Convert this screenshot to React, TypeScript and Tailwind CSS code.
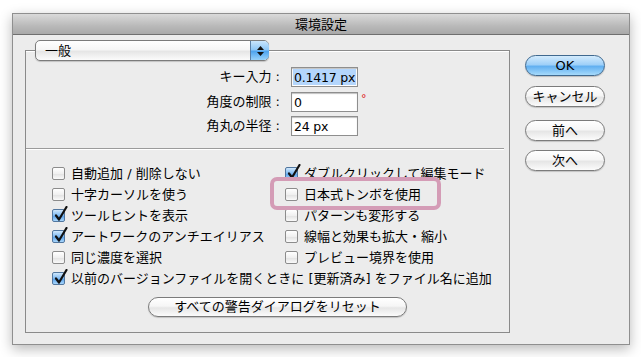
import React from "react";

const aqua =
  "bg-[linear-gradient(#ffffff_0%,#f6f6f6_45%,#e6e6e6_55%,#fbfbfb_100%)] border border-[#7b7b7b] shadow-[0_1px_1px_rgba(0,0,0,0.18)]";
const aquaBlue =
  "bg-[linear-gradient(#d3ebfd_0%,#9fd0f8_45%,#62b0f1_55%,#a6dafb_100%)] border border-[#40698f] shadow-[0_1px_1px_rgba(0,0,0,0.2)]";

function Check({ on }: { on?: boolean }) {
  return (
    <span
      className={`relative inline-block w-[13px] h-[13px] shrink-0 rounded-[2px] ${
        on
          ? "bg-[linear-gradient(#cfe7fc,#7db9f2_50%,#5aa3ec_55%,#a9d6fb)] border border-[#52779f]"
          : "bg-[linear-gradient(#ffffff,#f0f0f0_50%,#e3e3e3_55%,#fafafa)] border border-[#8c8c8c]"
      }`}
    >
      {on && (
        <svg
          className="absolute left-[1px] -top-[4px]"
          width="14"
          height="16"
          viewBox="0 0 14 16"
        >
          <path
            d="M2 9.5 L5 13.5 L12.5 1"
            fill="none"
            stroke="#111"
            strokeWidth="2.2"
            strokeLinecap="round"
            strokeLinejoin="round"
          />
        </svg>
      )}
    </span>
  );
}

function Row({ on, label }: { on?: boolean; label: string }) {
  return (
    <div className="flex items-center gap-[6px] h-[21px] whitespace-nowrap">
      <Check on={on} />
      <span>{label}</span>
    </div>
  );
}

function Field({
  label,
  value,
  selected,
  suffix,
}: {
  label: string;
  value: string;
  selected?: boolean;
  suffix?: boolean;
}) {
  return (
    <div className="flex items-center h-[20px]">
      <div className="w-[257px] text-right pr-[3px]">{label} :</div>
      <div className="ml-[8px] w-[67px] h-[20px] border border-[#8e8e8e] bg-white shadow-[inset_0_1px_1px_rgba(0,0,0,0.25)] p-[1px]">
        <div
          className={`h-full pl-[1px] leading-[17px] text-[12.5px] tracking-[-0.2px] whitespace-nowrap ${
            selected ? "bg-[#b4d6fc]" : ""
          }`}
        >
          {value}
        </div>
      </div>
      {suffix && (
        <span className="ml-[3px] -mt-[4px] text-[#d11] text-[11px]">°</span>
      )}
    </div>
  );
}

export default function App() {
  return (
    <div className="w-[641px] h-[357px] bg-white pt-[13px] pl-[12px] font-['DejaVu_Sans','Noto_Sans_CJK_JP',sans-serif] text-[13px] text-black">
      <div className="w-[618px] h-[332px] flex flex-col bg-[#ececec] border border-[#8f8f8f] shadow-[0_4px_12px_rgba(0,0,0,0.28)]">
        <div className="h-[21px] shrink-0 border-b border-[#6f6f6f] bg-[linear-gradient(#dadada,#b9b9b9_60%,#a9a9a9)] flex items-center justify-center leading-none">
          <span className="mt-[1px]">環境設定</span>
        </div>
        <div className="flex flex-1">
          <div className="pl-[12px] pt-[5px]">
            <div
              className={`relative z-10 ml-[10px] w-[234px] h-[21px] rounded-[5px] flex items-center ${aqua}`}
            >
              <span className="pl-[9px] flex-1">一般</span>
              <div className="w-[19px] h-full -mr-px rounded-r-[5px] bg-[linear-gradient(#c9e5fc,#8ec7f6_45%,#4fa4ee_55%,#98d2fa)] border-l border-[#5a7fa6] flex flex-col items-center justify-center gap-[2px]">
                <svg width="7" height="4" viewBox="0 0 7 4">
                  <path d="M0 4 L3.5 0 L7 4 Z" fill="#111" />
                </svg>
                <svg width="7" height="4" viewBox="0 0 7 4">
                  <path d="M0 0 L3.5 4 L7 0 Z" fill="#111" />
                </svg>
              </div>
            </div>
            <div className="relative -mt-[11px] w-[485px] h-[283px] border border-[#8a8a8a] shadow-[inset_0_1px_0_#fff] pt-[16px]">
              <div className="flex flex-col gap-[4.5px]">
                <Field label="キー入力" value="0.1417 px" selected />
                <Field label="角度の制限" value="0" suffix />
                <Field label="角丸の半径" value="24 px" />
              </div>
              <div className="mt-[12px] mr-[5px] h-[2px] border-t border-[#9b9b9b] border-b border-b-white" />
              <div className="mt-[13px] pl-[26px] grid grid-cols-[233px_1fr]">
                <Row label="自動追加 / 削除しない" />
                <Row on label="ダブルクリックして編集モード" />
                <Row label="十字カーソルを使う" />
                <Row label="日本式トンボを使用" />
                <Row on label="ツールヒントを表示" />
                <Row label="パターンも変形する" />
                <Row on label="アートワークのアンチエイリアス" />
                <Row label="線幅と効果も拡大・縮小" />
                <Row label="同じ濃度を選択" />
                <Row label="プレビュー境界を使用" />
                <div className="col-span-2">
                  <Row on label="以前のバージョンファイルを開くときに [更新済み] をファイル名に追加" />
                </div>
              </div>
              <div
                className={`mt-[8px] ml-[122px] w-[259px] h-[20px] rounded-full flex items-center justify-center ${aqua}`}
              >
                すべての警告ダイアログをリセット
              </div>
              <div className="absolute left-[244px] top-[126px] w-[171px] h-[33px] rounded-[7px] border-[4px] border-[#d49cb6]" />
            </div>
          </div>
          <div className="ml-[15px] pt-[20px] flex flex-col">
            <div
              className={`w-[80px] h-[21px] rounded-full flex items-center justify-center ${aquaBlue}`}
            >
              OK
            </div>
            <div
              className={`mt-[10px] w-[80px] h-[21px] rounded-full flex items-center justify-center ${aqua}`}
            >
              キャンセル
            </div>
            <div
              className={`mt-[13px] w-[80px] h-[21px] rounded-full flex items-center justify-center ${aqua}`}
            >
              前へ
            </div>
            <div
              className={`mt-[9px] w-[80px] h-[21px] rounded-full flex items-center justify-center ${aqua}`}
            >
              次へ
            </div>
          </div>
        </div>
      </div>
    </div>
  );
}
